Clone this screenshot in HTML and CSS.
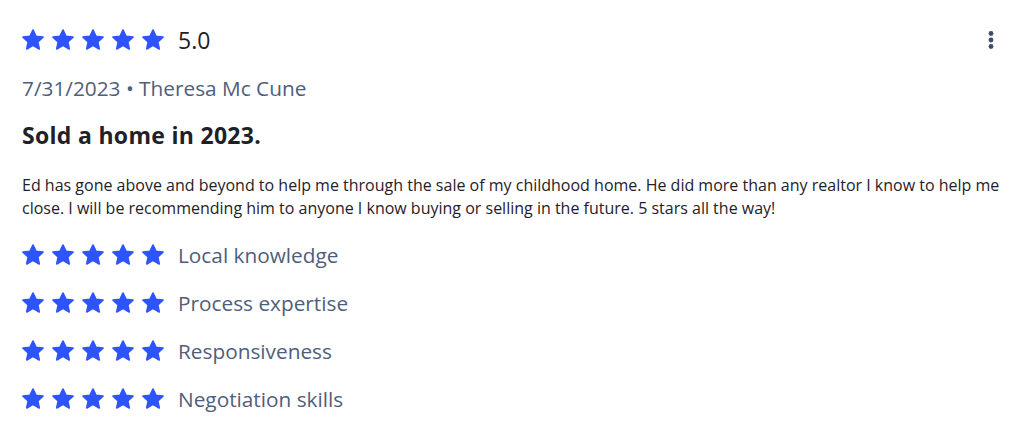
FILE: index.html
```html
<!DOCTYPE html>
<html>
<head>
<meta charset="utf-8">
<link rel="stylesheet" href="styles.css">
</head>
<body>
<div class="review">
  <div class="top">
    <div class="rating">
      <div class="stars">
        <svg class="star" viewBox="0 0 24 24"><path d="M12 2.8l2.75 5.9 6.45.7-4.8 4.4 1.35 6.4L12 16.95 6.25 20.2l1.35-6.4-4.8-4.4 6.45-.7z"/></svg>
        <svg class="star" viewBox="0 0 24 24"><path d="M12 2.8l2.75 5.9 6.45.7-4.8 4.4 1.35 6.4L12 16.95 6.25 20.2l1.35-6.4-4.8-4.4 6.45-.7z"/></svg>
        <svg class="star" viewBox="0 0 24 24"><path d="M12 2.8l2.75 5.9 6.45.7-4.8 4.4 1.35 6.4L12 16.95 6.25 20.2l1.35-6.4-4.8-4.4 6.45-.7z"/></svg>
        <svg class="star" viewBox="0 0 24 24"><path d="M12 2.8l2.75 5.9 6.45.7-4.8 4.4 1.35 6.4L12 16.95 6.25 20.2l1.35-6.4-4.8-4.4 6.45-.7z"/></svg>
        <svg class="star" viewBox="0 0 24 24"><path d="M12 2.8l2.75 5.9 6.45.7-4.8 4.4 1.35 6.4L12 16.95 6.25 20.2l1.35-6.4-4.8-4.4 6.45-.7z"/></svg>
      </div>
      <span class="score">5.0</span>
    </div>
    <svg class="more" viewBox="0 0 6 20"><circle cx="3" cy="3.5" r="2.4"/><circle cx="3" cy="10" r="2.4"/><circle cx="3" cy="16.5" r="2.4"/></svg>
  </div>
  <div class="meta">7/31/2023 • Theresa Mc Cune</div>
  <h2 class="title">Sold a home in 2023.</h2>
  <p class="body">Ed has gone above and beyond to help me through the sale of my childhood home. He did more than any realtor I know to help me close. I will be recommending him to anyone I know buying or selling in the future. 5 stars all the way!</p>
  <div class="subs">
    <div class="sub">
      <div class="stars">
        <svg class="star" viewBox="0 0 24 24"><path d="M12 2.8l2.75 5.9 6.45.7-4.8 4.4 1.35 6.4L12 16.95 6.25 20.2l1.35-6.4-4.8-4.4 6.45-.7z"/></svg>
        <svg class="star" viewBox="0 0 24 24"><path d="M12 2.8l2.75 5.9 6.45.7-4.8 4.4 1.35 6.4L12 16.95 6.25 20.2l1.35-6.4-4.8-4.4 6.45-.7z"/></svg>
        <svg class="star" viewBox="0 0 24 24"><path d="M12 2.8l2.75 5.9 6.45.7-4.8 4.4 1.35 6.4L12 16.95 6.25 20.2l1.35-6.4-4.8-4.4 6.45-.7z"/></svg>
        <svg class="star" viewBox="0 0 24 24"><path d="M12 2.8l2.75 5.9 6.45.7-4.8 4.4 1.35 6.4L12 16.95 6.25 20.2l1.35-6.4-4.8-4.4 6.45-.7z"/></svg>
        <svg class="star" viewBox="0 0 24 24"><path d="M12 2.8l2.75 5.9 6.45.7-4.8 4.4 1.35 6.4L12 16.95 6.25 20.2l1.35-6.4-4.8-4.4 6.45-.7z"/></svg>
      </div>
      <span class="label">Local knowledge</span>
    </div>
    <div class="sub">
      <div class="stars">
        <svg class="star" viewBox="0 0 24 24"><path d="M12 2.8l2.75 5.9 6.45.7-4.8 4.4 1.35 6.4L12 16.95 6.25 20.2l1.35-6.4-4.8-4.4 6.45-.7z"/></svg>
        <svg class="star" viewBox="0 0 24 24"><path d="M12 2.8l2.75 5.9 6.45.7-4.8 4.4 1.35 6.4L12 16.95 6.25 20.2l1.35-6.4-4.8-4.4 6.45-.7z"/></svg>
        <svg class="star" viewBox="0 0 24 24"><path d="M12 2.8l2.75 5.9 6.45.7-4.8 4.4 1.35 6.4L12 16.95 6.25 20.2l1.35-6.4-4.8-4.4 6.45-.7z"/></svg>
        <svg class="star" viewBox="0 0 24 24"><path d="M12 2.8l2.75 5.9 6.45.7-4.8 4.4 1.35 6.4L12 16.95 6.25 20.2l1.35-6.4-4.8-4.4 6.45-.7z"/></svg>
        <svg class="star" viewBox="0 0 24 24"><path d="M12 2.8l2.75 5.9 6.45.7-4.8 4.4 1.35 6.4L12 16.95 6.25 20.2l1.35-6.4-4.8-4.4 6.45-.7z"/></svg>
      </div>
      <span class="label">Process expertise</span>
    </div>
    <div class="sub">
      <div class="stars">
        <svg class="star" viewBox="0 0 24 24"><path d="M12 2.8l2.75 5.9 6.45.7-4.8 4.4 1.35 6.4L12 16.95 6.25 20.2l1.35-6.4-4.8-4.4 6.45-.7z"/></svg>
        <svg class="star" viewBox="0 0 24 24"><path d="M12 2.8l2.75 5.9 6.45.7-4.8 4.4 1.35 6.4L12 16.95 6.25 20.2l1.35-6.4-4.8-4.4 6.45-.7z"/></svg>
        <svg class="star" viewBox="0 0 24 24"><path d="M12 2.8l2.75 5.9 6.45.7-4.8 4.4 1.35 6.4L12 16.95 6.25 20.2l1.35-6.4-4.8-4.4 6.45-.7z"/></svg>
        <svg class="star" viewBox="0 0 24 24"><path d="M12 2.8l2.75 5.9 6.45.7-4.8 4.4 1.35 6.4L12 16.95 6.25 20.2l1.35-6.4-4.8-4.4 6.45-.7z"/></svg>
        <svg class="star" viewBox="0 0 24 24"><path d="M12 2.8l2.75 5.9 6.45.7-4.8 4.4 1.35 6.4L12 16.95 6.25 20.2l1.35-6.4-4.8-4.4 6.45-.7z"/></svg>
      </div>
      <span class="label">Responsiveness</span>
    </div>
    <div class="sub">
      <div class="stars">
        <svg class="star" viewBox="0 0 24 24"><path d="M12 2.8l2.75 5.9 6.45.7-4.8 4.4 1.35 6.4L12 16.95 6.25 20.2l1.35-6.4-4.8-4.4 6.45-.7z"/></svg>
        <svg class="star" viewBox="0 0 24 24"><path d="M12 2.8l2.75 5.9 6.45.7-4.8 4.4 1.35 6.4L12 16.95 6.25 20.2l1.35-6.4-4.8-4.4 6.45-.7z"/></svg>
        <svg class="star" viewBox="0 0 24 24"><path d="M12 2.8l2.75 5.9 6.45.7-4.8 4.4 1.35 6.4L12 16.95 6.25 20.2l1.35-6.4-4.8-4.4 6.45-.7z"/></svg>
        <svg class="star" viewBox="0 0 24 24"><path d="M12 2.8l2.75 5.9 6.45.7-4.8 4.4 1.35 6.4L12 16.95 6.25 20.2l1.35-6.4-4.8-4.4 6.45-.7z"/></svg>
        <svg class="star" viewBox="0 0 24 24"><path d="M12 2.8l2.75 5.9 6.45.7-4.8 4.4 1.35 6.4L12 16.95 6.25 20.2l1.35-6.4-4.8-4.4 6.45-.7z"/></svg>
      </div>
      <span class="label">Negotiation skills</span>
    </div>
  </div>
</div>
</body>
</html>
```
FILE: styles.css
```css
html, body {
  margin: 0;
  padding: 0;
  background: #ffffff;
}
body {
  font-family: "Open Sans", "Noto Sans", sans-serif;
  color: #1f2129;
}
.review {
  padding: 24px 16px 0 20px;
}
.top {
  display: flex;
  justify-content: space-between;
  align-items: center;
  height: 32px;
}
.rating {
  display: flex;
  align-items: center;
}
.stars {
  display: flex;
  gap: 4px;
}
.star {
  width: 26px;
  height: 26px;
  fill: #2e54ff;
  stroke: #2e54ff;
  stroke-width: 1.6;
  stroke-linejoin: round;
}
.score {
  margin-left: 12px;
  font-size: 23px;
  color: #1f2129;
  line-height: 32px;
}
.more {
  width: 6px;
  height: 20px;
  fill: #3d4d6a;
  margin-right: 10px;
}
.meta {
  margin-top: 16px;
  margin-left: 2px;
  font-size: 20.8px;
  line-height: 32px;
  color: #4f5e7b;
}
.title {
  margin: 16px 0 0 2px;
  font-size: 23px;
  letter-spacing: 0.3px;
  font-weight: 700;
  line-height: 30px;
  color: #1f2129;
}
.body {
  margin: 24px 0 0 2px;
  font-size: 16px;
  line-height: 23px;
  color: #1f2129;
}
.subs {
  margin-top: 19px;
  display: flex;
  flex-direction: column;
  gap: 16px;
}
.sub {
  display: flex;
  align-items: center;
  height: 32px;
}
.label {
  margin-left: 12px;
  font-size: 20.8px;
  color: #4f5e7b;
}
```
